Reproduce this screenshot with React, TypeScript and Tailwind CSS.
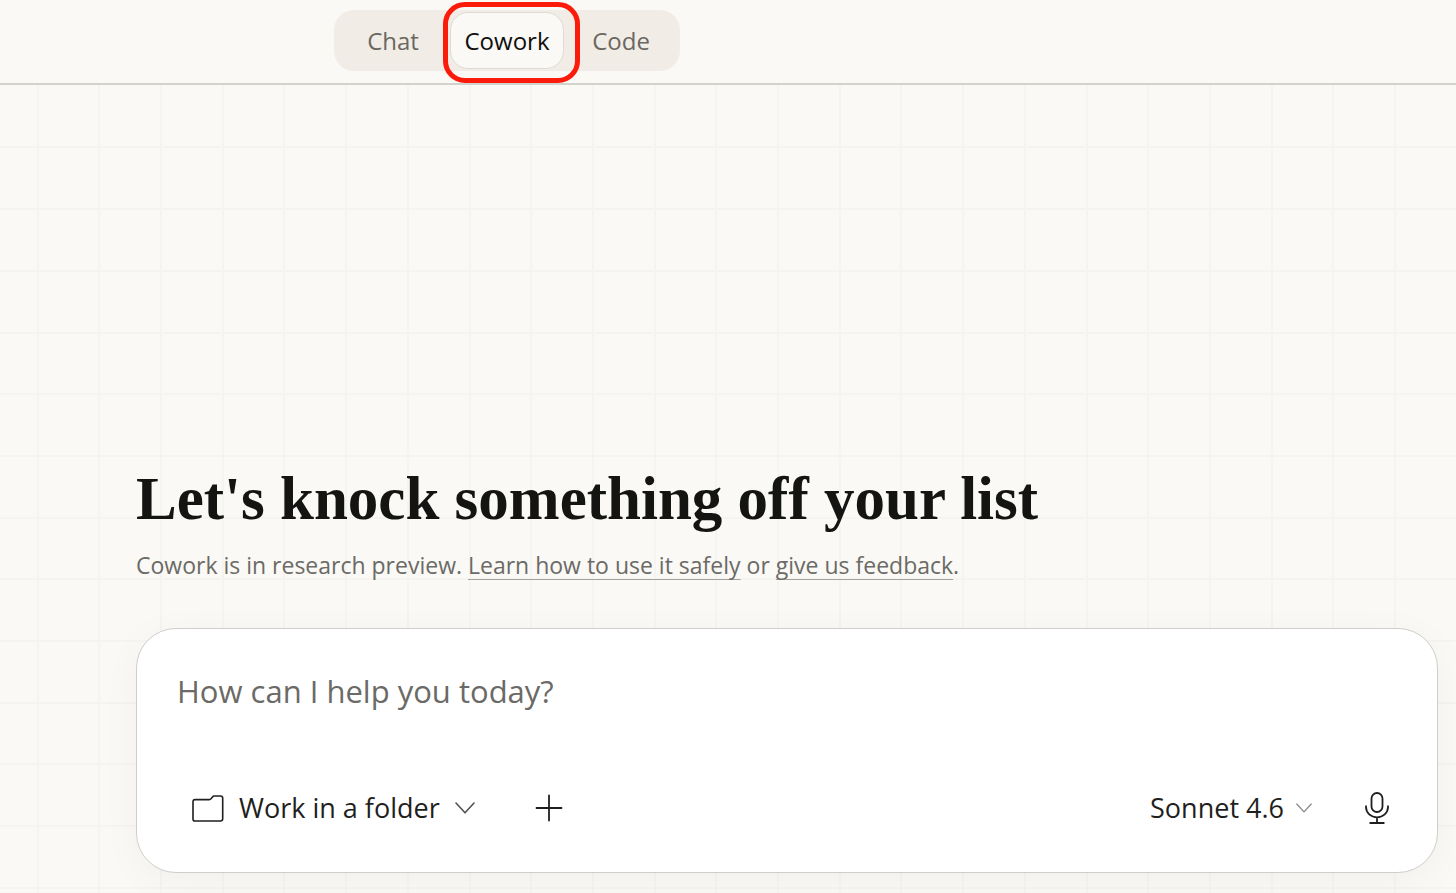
import React, { useState } from 'react';

type Mode = 'Chat' | 'Cowork' | 'Code';

const MODES: Mode[] = ['Chat', 'Cowork', 'Code'];

// Background grid lines, far enough out for wide windows
const GRID_STEP = 61.7;
const GRID_COLUMNS = Array.from({ length: 60 }, (_, i) => Math.round(36.6 + i * GRID_STEP));
const GRID_ROWS = Array.from({ length: 40 }, (_, i) => Math.round(61.4 + i * GRID_STEP));

const GridBackdrop: React.FC = () => (
  <svg className="absolute inset-0 w-full h-full text-[#f5f4f0]" fill="currentColor" aria-hidden="true">
    {GRID_COLUMNS.map((x) => (
      <rect key={`col-${x}`} x={x} y="0" width="2" height="100%" />
    ))}
    {GRID_ROWS.map((y) => (
      <rect key={`row-${y}`} x="0" y={y} width="100%" height="2" />
    ))}
  </svg>
);

const FolderIcon: React.FC = () => (
  <svg className="w-8 h-8" viewBox="0 0 32 32" fill="none" stroke="currentColor" strokeWidth="1.6" strokeLinejoin="round">
    <path d="M3 7.600h14.200c.8 0 1.300-.2 1.800-.8l1.500-1.900c.5-.6 1-.9 1.800-.9h6.200c1.400 0 2.200.8 2.200 2.200v20.600c0 1.400-.8 2.200-2.200 2.200H3C1.700 29 1 28.200 1 26.900V9.700C1 8.400 1.700 7.600 3 7.600Z" />
  </svg>
);

const ChevronIcon: React.FC<{ className: string }> = ({ className }) => (
  <svg className={className} viewBox="0 0 20 12" fill="none" stroke="currentColor" strokeWidth="1.6" strokeLinecap="round" strokeLinejoin="round">
    <path d="M1 1l9 9.8L19 1" />
  </svg>
);

const PlusIcon: React.FC = () => (
  <svg className="w-7 h-7" viewBox="0 0 28 28" fill="none" stroke="currentColor" strokeWidth="1.8" strokeLinecap="round">
    <path d="M14 1.5v25M1.500 14h25" />
  </svg>
);

const MicIcon: React.FC = () => (
  <svg className="w-6 h-8" viewBox="0 0 24 32" fill="none" stroke="currentColor" strokeWidth="1.8" strokeLinecap="round">
    <rect x="6.500" y="1" width="11" height="19" rx="5.500" />
    <path d="M1 14.200v.8c0 6 5 10.300 11 10.300S23 21 23 15v-.8M12 25.300v5.400M5.200 31h13.600" />
  </svg>
);

export default function App() {
  const [mode, setMode] = useState<Mode>('Cowork');
  const [prompt, setPrompt] = useState('');

  const linkClass = 'underline decoration-1 decoration-[#a3a29d] underline-offset-[5px] [text-decoration-skip-ink:none]';

  return (
    <div className="min-h-screen flex flex-col bg-[#faf9f5] font-['Open_Sans','Noto_Sans',sans-serif] text-[#1f1f1e] overflow-hidden">
      {/* Mode switcher */}
      <header className="relative z-10 pt-[10px] pb-3 pl-[334px] border-b-2 border-[#d3d2cd]">
        <nav className="w-[346px] p-[2px] grid grid-cols-3 rounded-[20px] bg-[#f1ede6]" aria-label="Mode">
          {MODES.map((item) => (
            <div key={item} className="relative">
              <button
                onClick={() => setMode(item)}
                aria-pressed={mode === item}
                className={`w-full h-[57px] rounded-[18px] border text-[24px] leading-8 cursor-pointer ${
                  mode === item
                    ? 'bg-[#faf9f5] border-[#dedbd3] text-[#0f0f0e]'
                    : 'border-transparent text-[#6b6760]'
                }`}
              >
                {item}
              </button>
              {item === 'Cowork' && (
                <span className="absolute -top-[10px] -bottom-[14px] -left-[7px] -right-[16px] rounded-[22px] border-[5px] border-[#fb1b0b] pointer-events-none" />
              )}
            </div>
          ))}
        </nav>
      </header>

      <main className="relative flex-1 flex flex-col justify-end pl-[136px] pr-[18px] pb-5">
        <GridBackdrop />

        <div className="relative">
          <h1 className="font-['Liberation_Serif',serif] font-bold text-[61px] leading-[72px] text-[#141413]">
            Let's knock something off your list
          </h1>
          <p className="mt-[14px] text-[23px] leading-8 text-[#6b6a66]">
            Cowork is in research preview.{' '}
            <a href="#safety" className={linkClass}>Learn how to use it safely</a> or{' '}
            <a href="#feedback" className={linkClass}>give us feedback</a>.
          </p>
        </div>

        {/* Prompt box */}
        <form
          onSubmit={(e) => e.preventDefault()}
          className="relative mt-[47px] pt-[42px] pb-10 px-10 rounded-[40px] border border-[#cfcecb] bg-white shadow-[0_8px_40px_rgba(0,0,0,0.04)]"
        >
          <textarea
            rows={1}
            value={prompt}
            onChange={(e) => setPrompt(e.target.value)}
            aria-label="Prompt"
            placeholder="How can I help you today?"
            className="block w-full h-10 text-[31px] leading-10 resize-none outline-none placeholder:text-[#6b6a66]"
          />

          <div className="mt-[73px] flex items-center justify-between h-12">
            <div className="flex items-center gap-[60px] pl-[15px]">
              <button type="button" className="flex items-center gap-[15px] text-[27px] cursor-pointer">
                <FolderIcon />
                <span>Work in a folder</span>
                <ChevronIcon className="w-5 h-3 text-[#52514e]" />
              </button>
              <button type="button" aria-label="Add" className="cursor-pointer">
                <PlusIcon />
              </button>
            </div>
            <div className="flex items-center gap-[53px] pr-2">
              <button type="button" className="flex items-center gap-3 text-[27px] cursor-pointer">
                <span>Sonnet 4.6</span>
                <ChevronIcon className="w-4 h-[10px] text-[#8a8985]" />
              </button>
              <button type="button" aria-label="Use voice" className="cursor-pointer">
                <MicIcon />
              </button>
            </div>
          </div>
        </form>
      </main>
    </div>
  );
}
